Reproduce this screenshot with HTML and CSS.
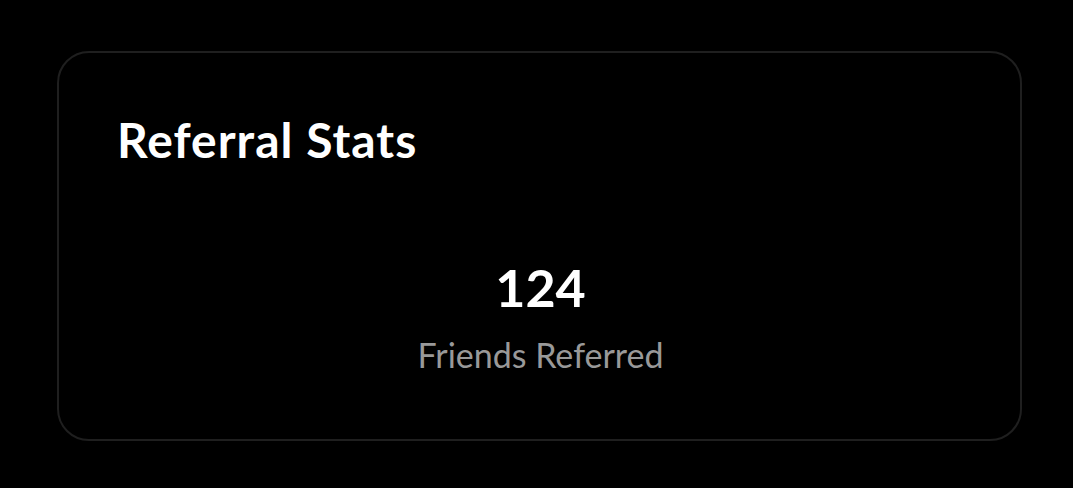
FILE: index.html
```html
<!DOCTYPE html>
<html lang="en">
<head>
<meta charset="utf-8">
<title>Referral Stats</title>
<link rel="stylesheet" href="styles.css">
</head>
<body>
<main class="page">
  <section class="card">
    <h2 class="card-title">Referral Stats</h2>
    <div class="stat">
      <div class="stat-value">124</div>
      <div class="stat-label">Friends Referred</div>
    </div>
  </section>
</main>
</body>
</html>
```

FILE: styles.css
```css
html, body {
  margin: 0;
  padding: 0;
  background: #000;
}
body {
  font-family: Lato, "Noto Sans", sans-serif;
  color: #fff;
}
.page {
  padding: 51px 51px 47px 57px;
}
.card {
  box-sizing: border-box;
  width: 965px;
  height: 390px;
  border: 2px solid #1f1f1f;
  border-radius: 32px;
  padding: 58px 56px 0 58px;
  display: flex;
  flex-direction: column;
}
.card-title {
  margin: 0;
  font-size: 48px;
  font-weight: 700;
  line-height: 1.2;
  letter-spacing: 1px;
}
.stat {
  margin-top: 87px;
  display: flex;
  flex-direction: column;
  align-items: center;
}
.stat-value {
  font-size: 52px;
  font-weight: 700;
  line-height: 1.2;
}
.stat-label {
  margin-top: 17px;
  font-size: 34px;
  color: #999;
  line-height: 1.2;
}
```
